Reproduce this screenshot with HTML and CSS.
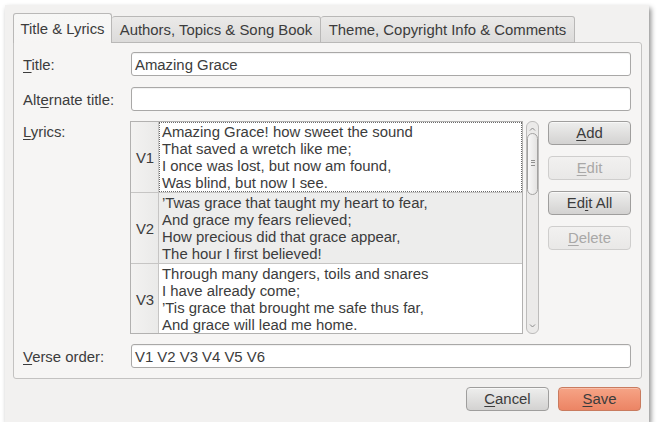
FILE: index.html
```html
<!DOCTYPE html>
<html>
<head>
<meta charset="utf-8">
<link rel="stylesheet" href="styles.css">
</head>
<body>
<div class="window">
  <div class="tabs">
    <div class="tab active tab-lyrics">Title &amp; Lyrics</div>
    <div class="tab tab-authors">Authors, Topics &amp; Song Book</div>
    <div class="tab tab-theme">Theme, Copyright Info &amp; Comments</div>
  </div>
  <div class="pane">
    <div class="row row-title">
      <span class="lbl"><u>T</u>itle:</span>
      <div class="input">Amazing Grace</div>
    </div>
    <div class="row row-alt">
      <span class="lbl">Alt<u>e</u>rnate title:</span>
      <div class="input"></div>
    </div>
    <div class="row row-lyrics">
      <span class="lbl lbl-top"><u>L</u>yrics:</span>
      <div class="lyrics">
        <div class="table">
          <div class="vrow">
            <div class="vhead">V1</div>
            <div class="vtext focus">Amazing Grace! how sweet the sound<br>That saved a wretch like me;<br>I once was lost, but now am found,<br>Was blind, but now I see.</div>
          </div>
          <div class="vrow alt">
            <div class="vhead">V2</div>
            <div class="vtext">’Twas grace that taught my heart to fear,<br>And grace my fears relieved;<br>How precious did that grace appear,<br>The hour I first believed!</div>
          </div>
          <div class="vrow">
            <div class="vhead">V3</div>
            <div class="vtext">Through many dangers, toils and snares<br>I have already come;<br>’Tis grace that brought me safe thus far,<br>And grace will lead me home.</div>
          </div>
        </div>
        <div class="scrollbar">
          <svg class="arrow up" width="7" height="4" viewBox="0 0 7 4"><path d="M1 3.5 L3.5 1 L6 3.5" fill="none" stroke="#8a8a8a" stroke-width="1"/></svg>
          <div class="thumb"><span class="grip"></span></div>
          <svg class="arrow down" width="7" height="4" viewBox="0 0 7 4"><path d="M1 0.5 L3.5 3 L6 0.5" fill="none" stroke="#8a8a8a" stroke-width="1"/></svg>
        </div>
        <div class="side">
          <div class="btn"><u>A</u>dd</div>
          <div class="btn disabled"><u>E</u>dit</div>
          <div class="btn">Ed<u>i</u>t All</div>
          <div class="btn disabled"><u>D</u>elete</div>
        </div>
      </div>
    </div>
    <div class="row row-verse">
      <span class="lbl"><u>V</u>erse order:</span>
      <div class="input">V1 V2 V3 V4 V5 V6</div>
    </div>
  </div>
  <div class="footer">
    <div class="btn"><u>C</u>ancel</div>
    <div class="btn primary"><u>S</u>ave</div>
  </div>
</div>
</body>
</html>
```
FILE: styles.css
```css
* { box-sizing: border-box; }
body {
  margin: 0;
  background: #ffffff;
  font-family: "Liberation Sans", Arial, sans-serif;
  font-size: 14.9px;
  color: #3c3c3c;
}
u { text-decoration: underline; text-underline-offset: 2px; text-decoration-thickness: 1px; }

.window {
  margin: 5px 0 0 5px;
  width: 644px;
  height: 417px;
  background: #f2f1f0;
  box-shadow: 2px 3px 5px rgba(0,0,0,0.45);
  padding: 8px 7px 10px 8px;
  display: flex;
  flex-direction: column;
}

.tabs {
  display: flex;
  align-items: flex-end;
  height: 30px;
  margin-bottom: -1px;
  position: relative;
  z-index: 1;
}
.tab {
  height: 27px;
  display: flex;
  align-items: center;
  justify-content: center;
  border: 1px solid #b9b8b7;
  border-left: none;
  border-radius: 3px 3px 0 0;
  background: linear-gradient(#ebeae9, #dcdbda);
  line-height: 17px;
  padding-top: 2px;
  white-space: nowrap;
}
.tab.active {
  height: 30px;
  border-left: 1px solid #b9b8b7;
  border-bottom: none;
  background: linear-gradient(#f7f7f6, #f6f5f4);
  padding-top: 1px;
}
.tab-lyrics { width: 99px; }
.tab-authors { width: 209px; }
.tab-theme { width: 254px; }

.pane {
  height: 337px;
  border: 1px solid #c3c2c1;
  border-radius: 0 3px 3px 3px;
  background: #f6f5f4;
  padding: 9px 10px 0 9px;
  display: flex;
  flex-direction: column;
}
.row {
  display: flex;
  align-items: center;
}
.lbl {
  width: 107px;
  flex: none;
  line-height: 17px;
  padding-top: 2px;
}
.lbl-top { align-self: flex-start; padding-top: 3px; }
.row-alt { margin-top: 11px; }
.row-lyrics { margin-top: 10px; align-items: flex-start; }
.row-verse { margin-top: 10px; }

.input {
  flex: 1;
  height: 24px;
  margin-left: 1px;
  background: #ffffff;
  border: 1px solid #a9a8a7;
  border-radius: 3px;
  padding: 2px 3px 0 3px;
  line-height: 20px;
  box-shadow: inset 0 1px 1px rgba(0,0,0,0.06);
}

.lyrics {
  flex: 1;
  display: flex;
  height: 213px;
}
.table {
  width: 393px;
  height: 213px;
  border: 1px solid #b2b1b0;
  background: #ffffff;
  display: flex;
  flex-direction: column;
  overflow: hidden;
}
.vrow {
  display: flex;
  height: 71px;
  border-bottom: 1px solid #c6c5c4;
  flex: none;
}
.vrow:last-child { border-bottom: none; height: 70px; }
.vhead {
  width: 28px;
  flex: none;
  display: flex;
  align-items: center;
  justify-content: center;
  background: linear-gradient(90deg, #f3f2f1, #eaeae9);
  border-right: 1px solid #c6c5c4;
  padding: 2px 0 0 1px;
}
.vrow.alt .vtext { background: #ededec; }
.vtext {
  flex: 1;
  padding: 2px 3px 0 3px;
  line-height: 17px;
  white-space: nowrap;
}
.vtext.focus { outline: 1px dotted #6a6a6a; outline-offset: -1px; }

.scrollbar {
  width: 13px;
  height: 213px;
  margin-left: 3px;
  border: 1px solid #bdbcbb;
  border-radius: 6px;
  background: #ebeae9;
  position: relative;
}
.arrow { position: absolute; left: 2px; }
.arrow.up { top: 5px; }
.arrow.down { bottom: 5px; }
.thumb {
  position: absolute;
  left: 0;
  right: 0;
  top: 11px;
  height: 62px;
  border: 1px solid #a3a2a1;
  border-radius: 6px;
  background: linear-gradient(90deg, #f8f8f8, #e4e3e2);
}
.grip {
  position: absolute;
  left: 3px;
  top: 26px;
  width: 4px;
  height: 6px;
  background: repeating-linear-gradient(#8f8f8f 0 1px, transparent 1px 2.5px);
}

.side {
  margin-left: 9px;
  display: flex;
  flex-direction: column;
  gap: 11px;
  width: 83px;
}
.btn {
  height: 24px;
  border: 1px solid #9f9e9d;
  border-radius: 4px;
  background: linear-gradient(#eeeeed, #d3d2d1);
  display: flex;
  align-items: center;
  justify-content: center;
  line-height: 17px;
  padding-top: 1px;
  box-shadow: inset 0 1px 0 rgba(255,255,255,0.6);
}
.btn.disabled {
  border-color: #cfcecd;
  background: linear-gradient(#f2f1f0, #e9e8e7);
  color: #a9a8a7;
  box-shadow: none;
}

.footer {
  margin-top: 8px;
  display: flex;
  justify-content: flex-end;
  gap: 9px;
  padding-right: 1px;
}
.footer .btn { width: 83px; }
.btn.primary {
  border-color: #c97b5f;
  background: linear-gradient(#f6a486, #ec8464);
  color: #3c3c3c;
  box-shadow: inset 0 1px 0 rgba(255,255,255,0.3);
}
```
